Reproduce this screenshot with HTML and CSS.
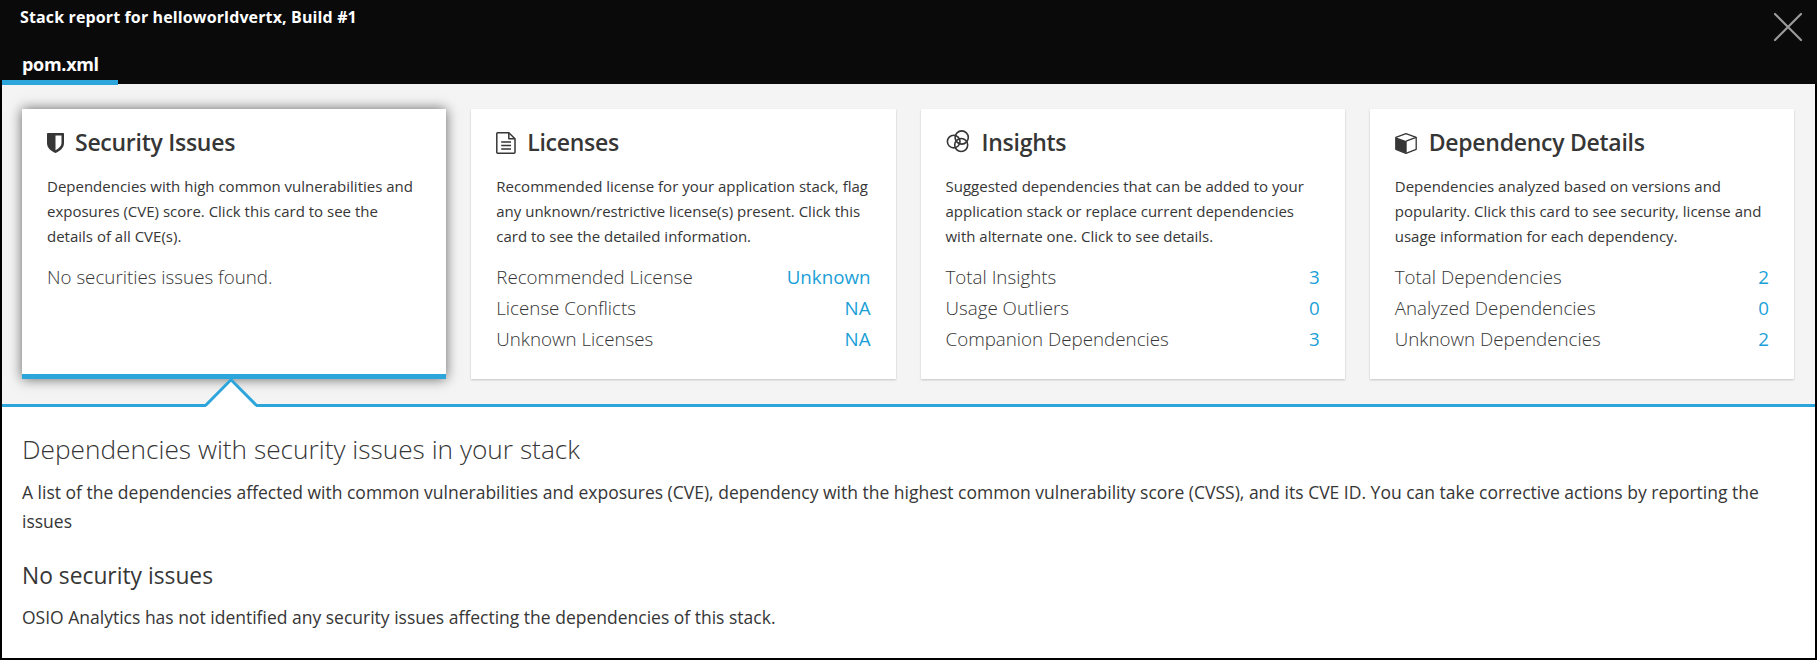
FILE: index.html
```html
<!DOCTYPE html>
<html lang="en">
<head>
<meta charset="utf-8">
<title>Stack report</title>
<link rel="stylesheet" href="styles.css">
</head>
<body>
<div class="modal">
  <header class="header">
    <h1 class="title">Stack report for helloworldvertx, Build #1</h1>
    <nav class="tabs"><a class="tab">pom.xml</a></nav>
    <button class="close" aria-label="Close">
      <svg width="30" height="30" viewBox="0 0 30 30"><path d="M2 2 28 28M28 2 2 28" stroke="#9b9b9b" stroke-width="2.2" stroke-linecap="round"/></svg>
    </button>
  </header>
  <section class="cards">
    <article class="card active">
      <h2 class="card-title">
        <svg class="icon shield" width="17" height="20" viewBox="0 0 17 20"><path fill="#363636" fill-rule="evenodd" d="M.8 0H16.200Q17 0 17 .8V10C17 15 13 18 8.500 20C4 18 0 15 0 10V.8Q0 0 .8 0ZM8.500 2.600V17.200C12 15.500 14.500 13 14.500 10V2.600Z"/></svg>
        <span>Security Issues</span>
      </h2>
      <p class="desc">Dependencies with high common vulnerabilities and exposures (CVE) score. Click this card to see the details of all CVE(s).</p>
      <div class="row"><span>No securities issues found.</span></div>
      <svg class="pointer" width="54" height="32" viewBox="0 0 54 32"><path d="M2 32V29L27 4 52 29V32Z" fill="#fff"/><path d="M1.500 29.500 27 3.800 52.500 29.500" fill="none" stroke="#2ca5da" stroke-width="3"/></svg>
    </article>
    <article class="card">
      <h2 class="card-title">
        <svg class="icon file" width="20" height="22" viewBox="0 0 20 22"><g fill="none" stroke="#363636" stroke-width="1.500" stroke-linejoin="round"><path d="M1.600.8H12.800L19 6.700V20.300Q19 21.200 18 21.200H1.800Q.8 21.200.8 20.300V1.700Q.8.8 1.600.8Z"/><path d="M12.800.8V6.800H19"/><path d="M5.200 10H15M5.200 13.500H15M5.200 17H15"/></g></svg>
        <span>Licenses</span>
      </h2>
      <p class="desc">Recommended license for your application stack, flag any unknown/restrictive license(s) present. Click this card to see the detailed information.</p>
      <div class="row"><span>Recommended License</span><b>Unknown</b></div>
      <div class="row"><span>License Conflicts</span><b>NA</b></div>
      <div class="row"><span>Unknown Licenses</span><b>NA</b></div>
    </article>
    <article class="card">
      <h2 class="card-title">
        <svg class="icon rings" width="24" height="24" viewBox="0 0 24 24"><g fill="none" stroke="#363636" stroke-width="1.600"><circle cx="7.700" cy="12.600" r="6.300"/><circle cx="15.700" cy="8.500" r="6.600"/><circle cx="15.200" cy="16" r="6.500"/></g></svg>
        <span>Insights</span>
      </h2>
      <p class="desc">Suggested dependencies that can be added to your application stack or replace current dependencies with alternate one. Click to see details.</p>
      <div class="row"><span>Total Insights</span><b>3</b></div>
      <div class="row"><span>Usage Outliers</span><b>0</b></div>
      <div class="row"><span>Companion Dependencies</span><b>3</b></div>
    </article>
    <article class="card">
      <h2 class="card-title">
        <svg class="icon cube" width="22" height="21" viewBox="0 0 22 21"><path d="M11 .7 21.200 4.300V16.300L11 20.300.8 16.300V4.300Z" fill="#fff" stroke="#363636" stroke-width="1.300" stroke-linejoin="round"/><path d="M.8 4.300 11.700 8.200V20.300L.8 16.300Z" fill="#363636"/><path d="M11 8.200 21.200 4.300" stroke="#363636" stroke-width="1.300"/></svg>
        <span>Dependency Details</span>
      </h2>
      <p class="desc">Dependencies analyzed based on versions and popularity. Click this card to see security, license and usage information for each dependency.</p>
      <div class="row"><span>Total Dependencies</span><b>2</b></div>
      <div class="row"><span>Analyzed Dependencies</span><b>0</b></div>
      <div class="row"><span>Unknown Dependencies</span><b>2</b></div>
    </article>
  </section>
  <main class="details">
    <h2 class="heading">Dependencies with security issues in your stack</h2>
    <p class="text">A list of the dependencies affected with common vulnerabilities and exposures (CVE), dependency with the highest common vulnerability score (CVSS), and its CVE ID. You can take corrective actions by reporting the issues</p>
    <h3 class="subheading">No security issues</h3>
    <p class="text">OSIO Analytics has not identified any security issues affecting the dependencies of this stack.</p>
  </main>
</div>
</body>
</html>
```
FILE: styles.css
```css
* { box-sizing: border-box; }
body { margin: 0; background: #000; color: #363636; font-family: "Open Sans", sans-serif; }
h1, h2, h3, p { margin: 0; }
.modal { height: 660px; padding: 0 2px 2px; display: flex; flex-direction: column; background: #000; overflow: hidden; }
.header { position: relative; height: 84px; flex: none; margin: 0 -2px; padding: 0 2px; background: #0a0a0a; color: #fff; }
.title { padding: 6px 18px 0; height: 46px; font-size: 16px; line-height: 22px; font-weight: 700; letter-spacing: .13px; }
.tabs { display: flex; }
.tab { position: relative; z-index: 1; width: 116px; height: 39px; padding: 6px 0 0 20px; font-size: 18px; line-height: 25px; font-weight: 700; letter-spacing: -.3px; border-bottom: 5px solid #2ca5da; }
.close { position: absolute; right: 14px; top: 12px; padding: 0; border: 0; background: none; }
.close svg { display: block; }
.cards { display: grid; grid-template-columns: repeat(4, 1fr); gap: 25px; flex: none; height: 323px; padding: 25px 21px 25px 20px; background: #f4f4f4; border-bottom: 3px solid #2ca5da; }
.card { position: relative; height: 270px; padding: 18px 25px 0; background: #fff; box-shadow: 0 1px 2px rgba(0, 0, 0, .2); }
.card.active { border-bottom: 5px solid #2ca5da; box-shadow: 0 0 12px rgba(0, 0, 0, .6); }
.pointer { position: absolute; left: 182px; top: 267px; }
.card-title { display: flex; height: 33px; font-size: 23px; line-height: 31px; font-weight: 600; letter-spacing: -.27px; }
.icon { flex: none; }
.shield { margin: 6px 11px 0 0; }
.file { margin: 5px 11px 0 0; }
.rings { margin: 2px 12px 0 0; }
.cube { margin: 6px 12px 0 0; }
.desc { margin: 14px -10px 12px 0; padding-right: 10px; font-size: 15px; line-height: 25px; }
.row { display: flex; justify-content: space-between; height: 31px; font-size: 18.75px; line-height: 31px; font-weight: 300; }
.row b { color: #1b9fd8; font-weight: 400; }
.details { flex: 1; padding: 24px 20px 0; background: #fff; }
.heading { font-size: 26.25px; line-height: 37px; font-weight: 300; }
.text { font-size: 17.5px; line-height: 29px; }
.heading + .text { margin-top: 10px; margin-bottom: 21px; }
.subheading { font-size: 22.8px; line-height: 38px; font-weight: 400; margin-bottom: 8px; }
```
